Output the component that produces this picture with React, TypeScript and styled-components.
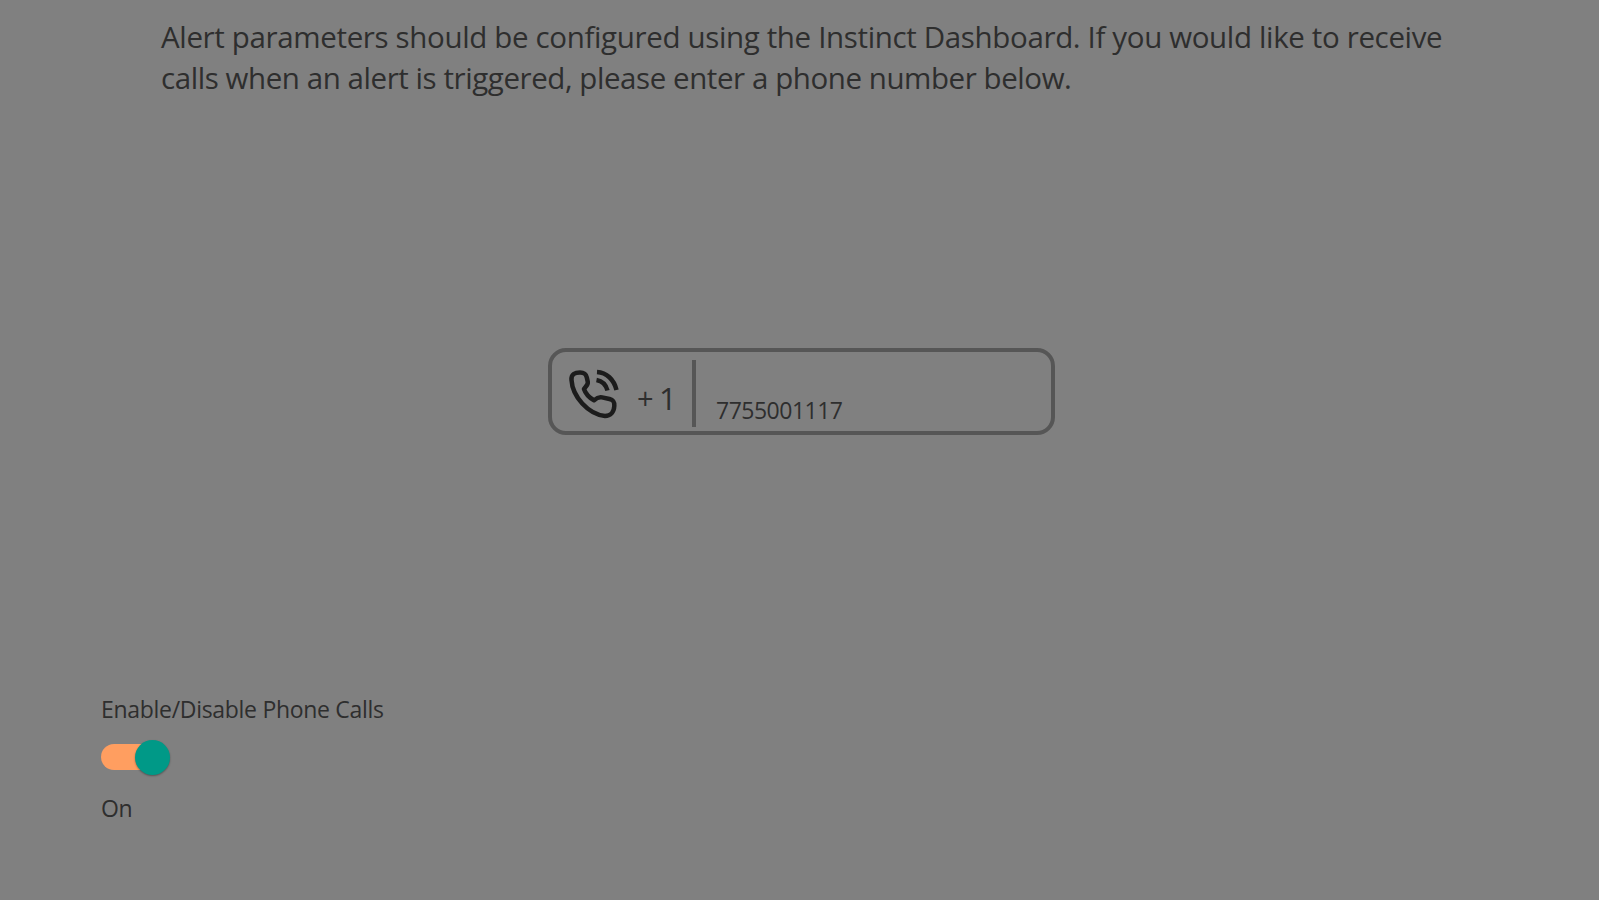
import { useState } from "react";
import styled, { createGlobalStyle } from "styled-components";

const App = () => {
  const [phone, setPhone] = useState<string>("7755001117");
  const [isOn, setIsOn] = useState<boolean>(true);

  return (
    <Page>
      <GlobalStyle />
      <Description>
        Alert parameters should be configured using the Instinct Dashboard. If
        you would like to receive
        <br />
        <SecondLine>
          calls when an alert is triggered, please enter a phone number below.
        </SecondLine>
      </Description>
      <PhoneBox>
        <PhoneCallIcon />
        <Plus>+</Plus>
        <CountryCode>1</CountryCode>
        <Divider />
        <PhoneInput value={phone} onChange={(e) => setPhone(e.target.value)} />
      </PhoneBox>
      <ToggleSection>
        <ToggleLabel>Enable/Disable Phone Calls</ToggleLabel>
        <Toggle role="switch" aria-checked={isOn} onClick={() => setIsOn(!isOn)}>
          <Track>
            <Thumb $on={isOn} />
          </Track>
        </Toggle>
        <ToggleState>{isOn ? "On" : "Off"}</ToggleState>
      </ToggleSection>
    </Page>
  );
};

const PhoneCallIcon = () => {
  return (
    <IconSvg viewBox="0 0 54 54" fill="none">
      <path d="M5.5 12 C5 6 9 4.5 14 4.5 C18.5 4.5 20 6 20.8 9.5 L21.8 14 C22.3 17 19 19 18 21 C19.5 25.5 23.5 29.8 28 32.3 C30 30.5 32.5 28.6 36 29.4 L43.5 31 C47.5 32 48.5 34 48.3 38 C48 44 44.5 48 39 48 C22 46 6.5 28.5 5.5 12 Z" />
      <path d="M31 4 C40.5 4.5 48 11.5 50.5 22" />
      <path d="M30.5 12 C36 13 40 17 41.5 22.5" />
    </IconSvg>
  );
};

const GlobalStyle = createGlobalStyle`
  * {
    box-sizing: border-box;
  }
  body {
    margin: 0;
    background-color: #808080;
    font-family: "Open Sans", "Noto Sans", sans-serif;
    color: #2e2e2e;
  }
`;

const Page = styled.div`
  display: flex;
  flex-direction: column;
  height: 900px;
  overflow: hidden;
  background-color: #808080;
`;

const Description = styled.p`
  margin: 16px 0 0 161px;
  font-size: 29.5px;
  line-height: 41px;
  letter-spacing: -0.35px;
  white-space: nowrap;
`;

const SecondLine = styled.span`
  letter-spacing: -0.43px;
`;

const PhoneBox = styled.div`
  display: flex;
  align-items: flex-start;
  width: 507px;
  height: 87px;
  margin: 250px 0 0 548px;
  padding-left: 14px;
  border: 4px solid #565656;
  border-radius: 18px;
`;

const IconSvg = styled.svg`
  width: 54px;
  height: 54px;
  margin-top: 16px;
  flex-shrink: 0;
  stroke: #1c1c1c;
  stroke-width: 4.5;
  stroke-linecap: butt;
  stroke-linejoin: round;
`;

const Plus = styled.span`
  width: 18px;
  margin: 28px 0 0 17px;
  font-size: 29px;
  line-height: 36px;
`;

const CountryCode = styled.span`
  width: 18px;
  margin: 28px 0 0 4px;
  font-size: 31px;
  line-height: 36px;
`;

const Divider = styled.div`
  width: 4px;
  height: 67px;
  margin: 8px 0 0 15px;
  background-color: #565656;
`;

const PhoneInput = styled.input`
  width: 320px;
  height: 32px;
  margin: 42px 0 0 20px;
  padding: 0;
  border: none;
  outline: none;
  background: transparent;
  color: #2e2e2e;
  font-family: inherit;
  font-size: 23px;
  letter-spacing: -0.5px;
`;

const ToggleSection = styled.div`
  display: flex;
  flex-direction: column;
  align-items: flex-start;
  margin: 257px 0 0 101px;
`;

const ToggleLabel = styled.label`
  font-size: 23px;
  line-height: 34px;
  letter-spacing: -0.3px;
`;

const Toggle = styled.button`
  display: flex;
  align-items: center;
  height: 36px;
  margin-top: 13px;
  padding: 0;
  border: none;
  background: none;
`;

const Track = styled.div`
  display: flex;
  align-items: center;
  width: 68px;
  height: 26px;
  border-radius: 13px;
  background-color: #ff9e60;
`;

const Thumb = styled.div<{ $on: boolean }>`
  width: 35px;
  height: 35px;
  margin-left: ${(props) => (props.$on ? "33.5px" : "0")};
  flex-shrink: 0;
  border-radius: 50%;
  background-color: #009987;
  box-shadow: 0 1px 2px rgba(0, 0, 0, 0.35);
`;

const ToggleState = styled.span`
  margin-top: 16px;
  font-size: 23px;
  line-height: 34px;
  letter-spacing: -0.3px;
`;

export default App;
